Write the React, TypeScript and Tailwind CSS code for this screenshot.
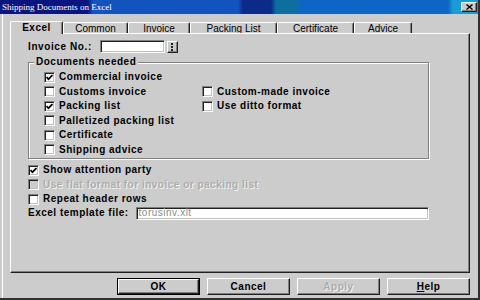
import React from 'react';

const sunken =
  'border-t border-l border-[#808080] border-r border-b border-r-white border-b-white shadow-[inset_1px_1px_0_#202020,inset_-1px_-1px_0_#c0c0c0]';
const raised =
  'border-t border-l border-white border-r border-b border-r-[#202020] border-b-[#202020] shadow-[inset_-1px_-1px_0_#808080]';

const Check: React.FC<{ checked?: boolean; disabled?: boolean }> = ({ checked, disabled }) => (
  <span
    className={`flex items-center justify-center w-[11px] h-[11px] shrink-0 ${sunken} ${
      disabled ? 'bg-[#cccccc]' : 'bg-white'
    }`}
  >
    {checked && (
      <svg width="7" height="7" viewBox="0 0 7 7">
        <polyline points="0.5,3 2.5,5.2 6.5,1" fill="none" stroke="#000" strokeWidth="1.7" />
      </svg>
    )}
  </span>
);

const CheckRow: React.FC<{ label: string; checked?: boolean; disabled?: boolean }> = ({
  label,
  checked,
  disabled,
}) => (
  <div className="flex items-center h-[14.5px] gap-[4px]">
    <Check checked={checked} disabled={disabled} />
    <span
      className={`text-[10px] leading-none whitespace-nowrap font-bold tracking-[0.5px] ${
        disabled ? 'text-[#acacac] [text-shadow:1px_1px_0_#f2f2f2]' : 'text-black'
      }`}
    >
      {label}
    </span>
  </div>
);

const tabs = [
  { label: 'Excel', w: 'w-[53px]' },
  { label: 'Common', w: 'w-[65px]' },
  { label: 'Invoice', w: 'w-[62px]' },
  { label: 'Packing List', w: 'w-[87px]' },
  { label: 'Certificate', w: 'w-[77px]' },
  { label: 'Advice', w: 'w-[58px]' },
];

export default function App() {
  return (
    <div className="w-[480px] h-[300px] bg-[#cccccc] flex flex-col border-r-2 border-b-2 border-[#303030] font-['Liberation_Sans',Arial,sans-serif] text-black overflow-hidden">
      {/* Title bar */}
      <div className="h-[14px] shrink-0 flex items-center justify-between pl-[2px] pr-[1px] bg-[linear-gradient(90deg,#0a1580_0px,#0a1580_88px,#1253c0_93px,#1253c0_238px,#0b2a8a_243px,#0b2a8a_271px,#0c6fa0_276px,#0c6fa0_296px,#0d65c8_301px,#0d65c8_448px,#1a9cd4_453px)]">
        <span className="text-white text-[9px] leading-none font-['Liberation_Serif',serif]">
          Shipping Documents on Excel
        </span>
        <div className={`w-[16px] h-[10px] bg-[#cccccc] flex items-center justify-center ${raised}`}>
          <svg width="7" height="6" viewBox="0 0 7 6">
            <path d="M0.5 0.5 L6.5 5.5 M6.5 0.5 L0.5 5.5" stroke="#000" strokeWidth="1.4" />
          </svg>
        </div>
      </div>

      {/* Body */}
      <div className="flex-1 flex flex-col ml-[2px] border-l border-white pl-[7px] pr-[8px] pt-[7px]">
        {/* Tabs */}
        <div className="flex items-end h-[12px] shrink-0">
          {tabs.map((t, i) =>
            i === 0 ? (
              <div
                key={t.label}
                className={`${t.w} h-[13px] -mb-px relative z-10 bg-[#cccccc] flex items-center justify-center border-t border-l border-white border-r border-r-[#202020] rounded-tl-[2px] rounded-tr-[2px] shadow-[inset_-1px_0_0_#808080] text-[10px] font-bold tracking-[0.5px] leading-none`}
              >
                {t.label}
              </div>
            ) : (
              <div
                key={t.label}
                className={`${t.w} h-[11px] flex items-center justify-center border-t border-l border-white border-r border-r-[#202020] rounded-tl-[2px] rounded-tr-[2px] shadow-[inset_-1px_0_0_#808080] text-[10px] leading-none pt-[1px]`}
              >
                {t.label}
              </div>
            )
          )}
        </div>

        {/* Panel */}
        <div className="flex-1 flex flex-col border-t border-l border-white border-r border-b border-r-[#202020] border-b-[#202020] shadow-[inset_-1px_-1px_0_#808080] pl-[17px] pt-[6px]">
          <div className="flex items-center h-[13px] gap-[8px]">
            <span className="text-[10px] font-bold tracking-[0.6px] leading-none">Invoice No.:</span>
            <div className="flex items-center">
              <div className={`w-[65px] h-[13px] bg-white ${sunken}`} />
              <div className={`ml-[2px] w-[11px] h-[12px] bg-[#cccccc] flex flex-col items-center justify-center gap-[1px] ${raised}`}>
                <span className="w-[2px] h-[2px] bg-[#202020]" />
                <span className="w-[2px] h-[2px] bg-[#202020]" />
                <span className="w-[2px] h-[2px] bg-[#202020]" />
              </div>
            </div>
          </div>

          <fieldset className="mt-[3px] w-[401px] border border-[#808080] shadow-[1px_1px_0_#fff,inset_1px_1px_0_#fff] pl-[15px] pb-[1px]">
            <legend className="-ml-[10px] px-[2px] bg-[#cccccc] text-[10px] font-bold tracking-[0.5px] leading-[12px]">
              Documents needed
            </legend>
            <div className="grid grid-cols-[158px_1fr] pt-[2px]">
              <CheckRow label="Commercial invoice" checked />
              <div />
              <CheckRow label="Customs invoice" />
              <CheckRow label="Custom-made invoice" />
              <CheckRow label="Packing list" checked />
              <CheckRow label="Use ditto format" />
              <CheckRow label="Palletized packing list" />
              <div />
              <CheckRow label="Certificate" />
              <div />
              <CheckRow label="Shipping advice" />
              <div />
            </div>
          </fieldset>

          <div className="mt-[4px] flex flex-col">
            <CheckRow label="Show attention party" checked />
            <CheckRow label="Use flat format for invoice or packing list" disabled />
            <CheckRow label="Repeat header rows" />
            <div className="flex items-center h-[13px] w-[401px] gap-[7px]">
              <span className="text-[10px] font-bold tracking-[0.5px] leading-none whitespace-nowrap">
                Excel template file:
              </span>
              <div className={`flex-1 h-[13px] bg-white flex items-center pl-[2px] ${sunken}`}>
                <span className="text-[10px] leading-none text-[#8c8c8c] tracking-[0.5px]">torusinv.xlt</span>
              </div>
            </div>
          </div>
        </div>

        {/* Buttons */}
        <div className="flex justify-end gap-[7px] mt-[5px] mb-[3px] h-[17px] shrink-0">
          <div className="w-[83px] h-[17px] border border-black">
            <div className={`w-full h-full flex items-center justify-center text-[10px] font-bold tracking-[0.5px] leading-none ${raised}`}>
              OK
            </div>
          </div>
          <div className={`w-[83px] h-[17px] flex items-center justify-center text-[10px] font-bold tracking-[0.5px] leading-none ${raised}`}>
            Cancel
          </div>
          <div className={`w-[83px] h-[17px] flex items-center justify-center text-[10px] font-bold tracking-[0.5px] leading-none text-[#acacac] [text-shadow:1px_1px_0_#f2f2f2] ${raised}`}>
            Apply
          </div>
          <div className={`w-[83px] h-[17px] flex items-center justify-center text-[10px] font-bold tracking-[0.5px] leading-none ${raised}`}>
            <span>
              <span className="underline">H</span>elp
            </span>
          </div>
        </div>
      </div>
    </div>
  );
}
